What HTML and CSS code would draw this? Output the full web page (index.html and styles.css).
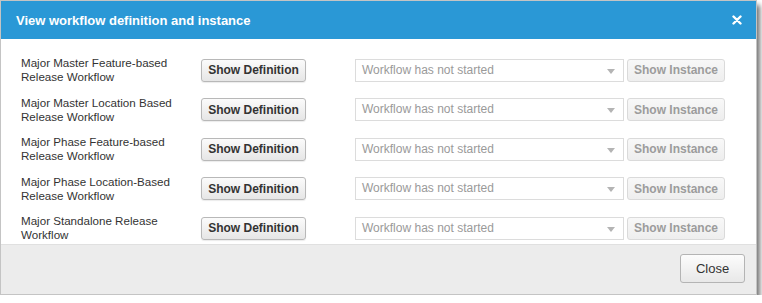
FILE: index.html
```html
<!DOCTYPE html>
<html lang="en">
<head>
  <meta charset="UTF-8" />
  <title>View workflow definition and instance</title>
  <link rel="stylesheet" href="styles.css">
</head>
<body>

  <div class="dialog">
    <!-- header -->
    <div class="dialog-header">
      <span class="dialog-title">View workflow definition and instance</span>
      <span class="dialog-close">
        <svg width="10" height="10" viewBox="0 0 10 10">
          <path d="M1.5 1.5 L8.5 8.5 M8.5 1.5 L1.5 8.5" stroke="#fff" stroke-width="2.4" stroke-linecap="round" />
        </svg>
      </span>
    </div>

    <!-- rows -->
    <div class="dialog-body">
      <div class="wf-row">
        <div class="wf-name">Major Master Feature-based<br>Release Workflow</div>
        <button class="btn btn-def">Show Definition</button>
        <div class="wf-select">Workflow has not started<span class="caret"></span></div>
        <button class="btn btn-inst">Show Instance</button>
      </div>
      <div class="wf-row">
        <div class="wf-name">Major Master Location Based<br>Release Workflow</div>
        <button class="btn btn-def">Show Definition</button>
        <div class="wf-select">Workflow has not started<span class="caret"></span></div>
        <button class="btn btn-inst">Show Instance</button>
      </div>
      <div class="wf-row">
        <div class="wf-name">Major Phase Feature-based<br>Release Workflow</div>
        <button class="btn btn-def">Show Definition</button>
        <div class="wf-select">Workflow has not started<span class="caret"></span></div>
        <button class="btn btn-inst">Show Instance</button>
      </div>
      <div class="wf-row">
        <div class="wf-name">Major Phase Location-Based<br>Release Workflow</div>
        <button class="btn btn-def">Show Definition</button>
        <div class="wf-select">Workflow has not started<span class="caret"></span></div>
        <button class="btn btn-inst">Show Instance</button>
      </div>
      <div class="wf-row">
        <div class="wf-name">Major Standalone Release<br>Workflow</div>
        <button class="btn btn-def">Show Definition</button>
        <div class="wf-select">Workflow has not started<span class="caret"></span></div>
        <button class="btn btn-inst">Show Instance</button>
      </div>
    </div>

    <!-- footer -->
    <div class="dialog-footer">
      <button class="btn btn-close">Close</button>
    </div>
  </div>

</body>
</html>
```

FILE: styles.css
```css
body {
  font-family: 'Liberation Sans', Arial, sans-serif;
  margin: 0;
  padding: 0;
  background: #fff;
}

/* dialog frame */
.dialog {
  width: 757px;
  border: 1px solid #c4c4c4;
  box-sizing: border-box;
  background: #fff;
  box-shadow: 3px 5px 5px rgba(0, 0, 0, 0.55);
}

.dialog-header {
  height: 38px;
  background: #2a98d6;
  display: flex;
  align-items: center;
  justify-content: space-between;
  padding: 0 14px 0 15px;
}

.dialog-title {
  color: #fff;
  font-size: 13px;
  font-weight: bold;
  padding-top: 1px;
}

.dialog-close {
  display: flex;
  width: 10px;
  height: 10px;
  cursor: pointer;
}

/* rows */
.dialog-body {
  padding: 17px 0 2px 20px;
  display: flex;
  flex-direction: column;
  gap: 11.6px;
}

.wf-row {
  display: flex;
  align-items: center;
  height: 28px;
}

.wf-name {
  width: 180px;
  font-size: 11.6px;
  line-height: 14px;
  color: #333;
}

.btn {
  font-family: 'Liberation Sans', Arial, sans-serif;
  font-size: 12px;
  height: 23px;
  padding: 0;
  border-radius: 3px;
  box-sizing: border-box;
  cursor: pointer;
}

.btn-def {
  width: 105px;
  font-weight: bold;
  color: #333;
  border: 1px solid #b8b8b8;
  background: linear-gradient(#fbfbfb, #e6e6e6);
  box-shadow: 0 1px 1px rgba(0, 0, 0, 0.08);
}

.wf-select {
  position: relative;
  width: 269px;
  height: 23px;
  margin-left: 49px;
  padding-left: 6px;
  border: 1px solid #dcdcdc;
  box-sizing: border-box;
  font-size: 12px;
  line-height: 21px;
  color: #9a9a9a;
}

.wf-select .caret {
  position: absolute;
  right: 8px;
  top: 9px;
  border-left: 4px solid transparent;
  border-right: 4px solid transparent;
  border-top: 5px solid #b4b4b4;
}

.btn-inst {
  width: 98px;
  margin-left: 3px;
  font-weight: bold;
  color: #9c9c9c;
  border: 1px solid #dadada;
  background: linear-gradient(#f8f8f8, #eeeeee);
}

/* footer */
.dialog-footer {
  height: 50px;
  background: #ececec;
  border-top: 1px solid #e0e0e0;
  box-sizing: border-box;
  display: flex;
  justify-content: flex-end;
  align-items: flex-start;
  padding: 9px 11px 0 0;
}

.btn-close {
  width: 65px;
  height: 29px;
  font-size: 13px;
  color: #333;
  border: 1px solid #b4b4b4;
  background: linear-gradient(#fcfcfc, #e8e8e8);
}
```
